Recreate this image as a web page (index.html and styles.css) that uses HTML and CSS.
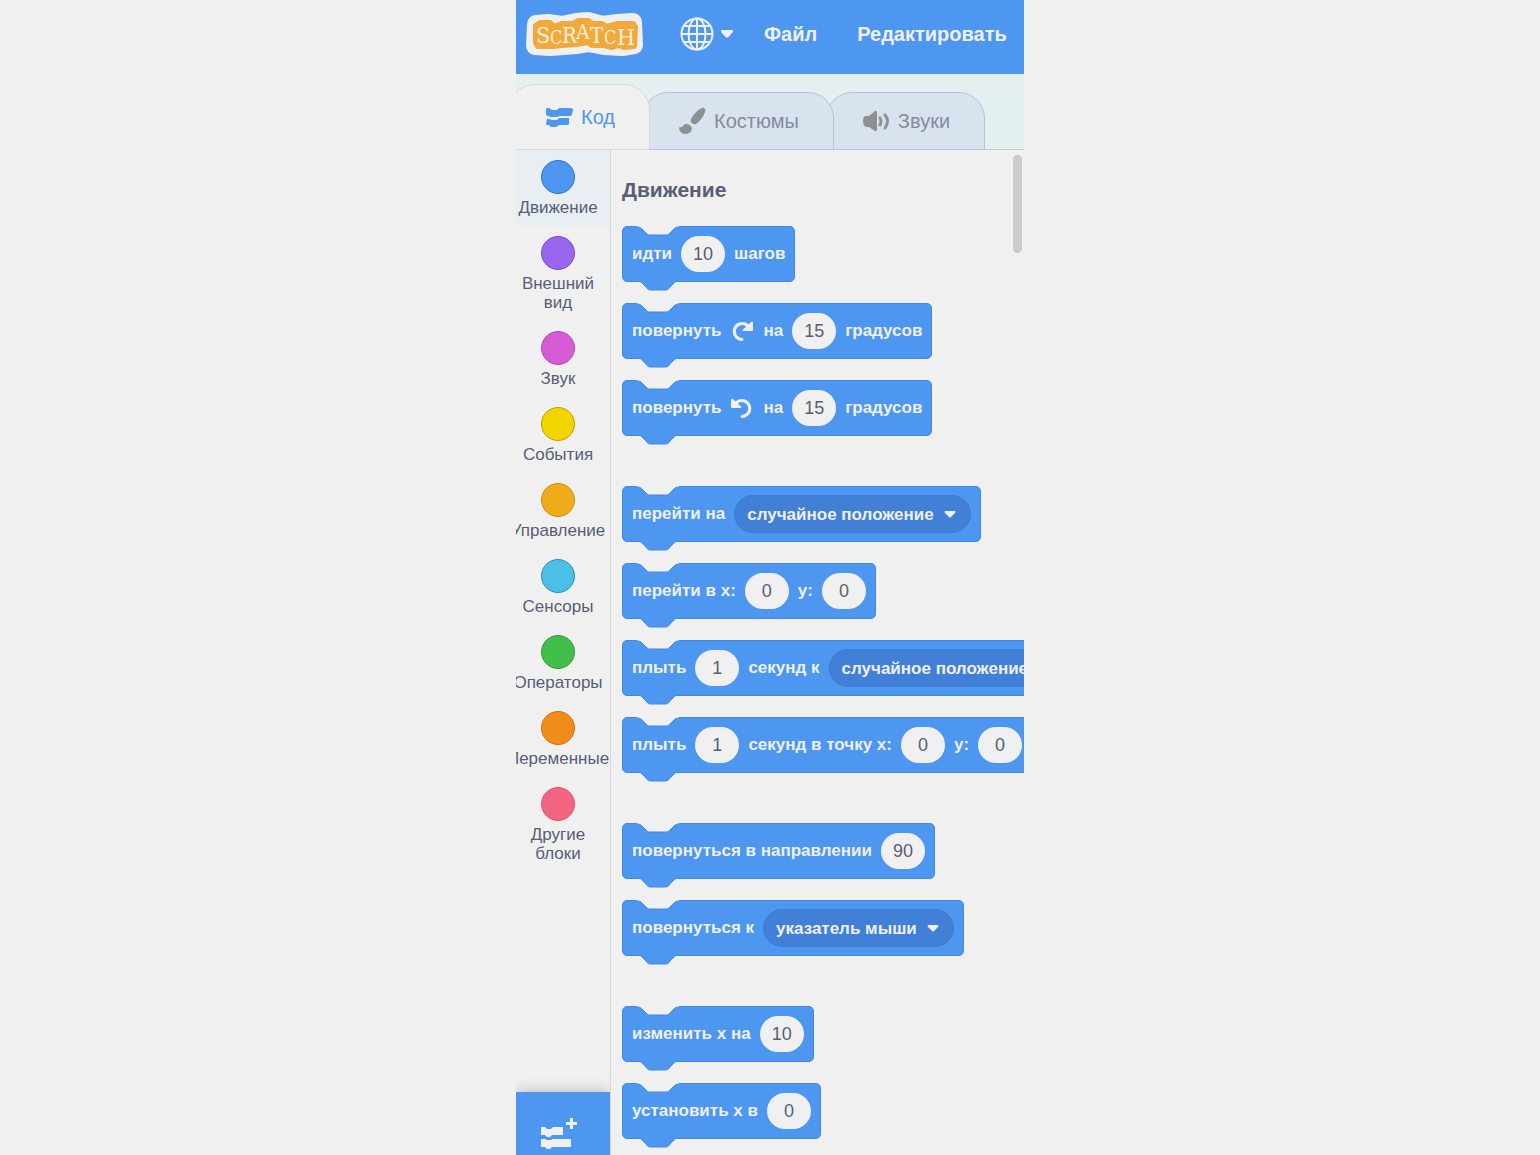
FILE: index.html
```
<!DOCTYPE html>
<html lang="ru">
<head>
	<meta charset="UTF-8">
	<meta name="viewport" content="width=device-width, initial-scale=1.0">
	<title>Scratch</title>
	<link rel="stylesheet" href="styles.css">
</head>
<body>
	<svg class="sprite" aria-hidden="true">
		<symbol id="notch" viewBox="0 0 42 10">
			<path class="notch-fill" d="M0 0V1C3 1 4 2 5 3L9 7C11 9 12 9 14 9H28C30 9 31 9 33 7L37 3C38 2 39 1 42 1V0Z"/>
			<path class="edge" d="M0 1C3 1 4 2 5 3L9 7C11 9 12 9 14 9H28C30 9 31 9 33 7L37 3C38 2 39 1 42 1"/>
		</symbol>
		<symbol id="bump" viewBox="0 0 42 10">
			<path class="bump-fill" d="M0 0C3 0 4 1 5 2L9 6C11 9 12 9 14 9H28C30 9 31 9 33 6L37 2C38 1 39 0 42 0Z"/>
			<path class="edge" d="M0 0C3 0 4 1 5 2L9 6C11 9 12 9 14 9H28C30 9 31 9 33 6L37 2C38 1 39 0 42 0"/>
		</symbol>
		<symbol id="turn" viewBox="0 0 24 24">
			<path d="M12 20.500A8 8 0 1 1 17.500 6.500" fill="none" stroke="#f0f0f0" stroke-width="3" stroke-linecap="round"/>
			<path d="M21 3Q23 2 23 4V11Q23 12 22 12H14Q12 12 13 10.500Z" fill="#f0f0f0"/>
		</symbol>
	</svg>

	<div class="app">
		<header class="menu-bar">
			<a class="logo" href="#" aria-label="Scratch">
				<svg width="118" height="46" viewBox="0 0 118 46">
					<path class="logo-outline" d="M10 13L22 12L36 14L50 11L62 10L76 14L92 12L107 11L108 34L96 36L78 35L62 32L50 34L24 36L9 35Z"/>
					<path class="logo-plate" d="M10 15L14 12H24L28 16L36 13H47L52 10H62L66 13H76L80 16L92 13H107L109 16L108 35L98 36L92 34L86 36L78 34H66L62 31L50 33L36 34L28 35L12 35L10 32Z"/>
					<text class="logo-text"><tspan x="10" y="32" font-size="23">S</tspan><tspan x="24" y="33" font-size="18">C</tspan><tspan x="36" y="32" font-size="22">R</tspan><tspan x="50" y="28" font-size="21">A</tspan><tspan x="64" y="32" font-size="22">T</tspan><tspan x="78" y="33" font-size="18">C</tspan><tspan x="91" y="34" font-size="23">H</tspan></text>
				</svg>
			</a>
			<button class="language" aria-label="Язык">
				<svg width="34" height="34" viewBox="0 0 34 34" fill="none" stroke="#f0f0f0" stroke-width="2">
					<circle cx="17" cy="17" r="15.500"/>
					<ellipse cx="17" cy="17" rx="8.500" ry="15.500"/>
					<path d="M17 1V33M1 17H33M4 9H30M4 25H30"/>
				</svg>
				<svg width="14" height="10" viewBox="0 0 14 10">
					<path d="M2 1H12Q14 1.500 12.500 3.500L8.500 8Q7 9.500 5.500 8L1.500 3.500Q0 1.500 2 1Z" fill="#f0f0f0"/>
				</svg>
			</button>
			<button class="menu-item">Файл</button>
			<button class="menu-item">Редактировать</button>
		</header>

		<div class="tabs">
			<button class="tab tab-active">
				<svg width="28" height="22" viewBox="0 0 28 22" fill="#4d97f0">
					<path d="M2 2H4Q6 4 8 4H11Q13 4 14 2H26Q28 2 28 4L27 8Q27 10 25 10H15Q13 11 11 11H6Q5 11 3 10Q1 10 1 8V3Z"/>
					<path d="M2 13H4Q6 14 7 14H11Q13 14 14 12H23Q25 12 24 14V18Q24 19 22 19H14Q12 21 10 21H7Q5 21 4 19H2Q1 19 1 18Z"/>
				</svg>
				Код
			</button>
			<button class="tab">
				<svg width="28" height="28" viewBox="0 0 28 28" fill="#8f9092">
					<path d="M26 1Q28 2 27 5Q24 13 18 17Q16 18 14 16Q12 15 13 12Q17 4 24 1Q25 0 26 1Z"/>
					<path d="M8 17Q12 17 14 21Q14 26 8 27Q2 27 1 21Q1 20 3 20Q5 20 5 19Q6 17 8 17Z"/>
				</svg>
				Костюмы
			</button>
			<button class="tab">
				<svg width="28" height="22" viewBox="0 0 28 22" fill="#8f9092">
					<path d="M13 1Q15 0 15 3V19Q15 22 13 21L7 17H4Q1 16 1 11Q1 6 4 6H7Z"/>
					<path d="M18 8Q20 11 18 15M23 5Q28 11 23 18" fill="none" stroke="#8f9092" stroke-width="3" stroke-linecap="round"/>
				</svg>
				Звуки
			</button>
		</div>

		<main class="editor">
			<div class="sidebar">
				<nav class="categories">
					<a class="category selected" href="#"><span class="bubble motion"></span>Движение</a>
					<a class="category" href="#"><span class="bubble looks"></span>Внешний<br>вид</a>
					<a class="category" href="#"><span class="bubble sound"></span>Звук</a>
					<a class="category" href="#"><span class="bubble events"></span>События</a>
					<a class="category" href="#"><span class="bubble control"></span>Управление</a>
					<a class="category" href="#"><span class="bubble sensing"></span>Сенсоры</a>
					<a class="category" href="#"><span class="bubble operators"></span>Операторы</a>
					<a class="category" href="#"><span class="bubble variables"></span>Переменные</a>
					<a class="category" href="#"><span class="bubble more"></span>Другие<br>блоки</a>
				</nav>
				<button class="add-extension" aria-label="Добавить расширение">
					<svg width="38" height="32" viewBox="0 0 38 32" fill="#f0f0f0">
						<path d="M1 9H5L7 11H11L13 9H23V17H12L10 19H7L5 17H1Z"/>
						<path d="M1 21H5L7 22H11L13 21H31V29H12L10 31H7L5 29H1Z"/>
						<path d="M30 0H33V4H37V7H33V11H30V7H26V4H30Z"/>
					</svg>
				</button>
			</div>

			<section class="palette">
				<h2>Движение</h2>
				<div class="group">
					<div class="block">
						<svg class="notch"><use href="#notch"/></svg>
						<span>идти</span><input class="number" value="10" aria-label="шагов"><span>шагов</span>
						<svg class="bump"><use href="#bump"/></svg>
					</div>
					<div class="block">
						<svg class="notch"><use href="#notch"/></svg>
						<span>повернуть</span><svg class="turn"><use href="#turn"/></svg><span>на</span><input class="number" value="15" aria-label="градусов по часовой стрелке"><span>градусов</span>
						<svg class="bump"><use href="#bump"/></svg>
					</div>
					<div class="block">
						<svg class="notch"><use href="#notch"/></svg>
						<span>повернуть</span><svg class="turn turn-left"><use href="#turn"/></svg><span>на</span><input class="number" value="15" aria-label="градусов против часовой стрелки"><span>градусов</span>
						<svg class="bump"><use href="#bump"/></svg>
					</div>
				</div>

				<div class="group">
					<div class="block">
						<svg class="notch"><use href="#notch"/></svg>
						<span>перейти на</span>
						<span class="dropdown">
							<select aria-label="перейти на"><option>случайное положение</option></select>
							<svg class="arrow" viewBox="0 0 12 8"><path d="M1 1H11Q12 2 11 3L7 7Q6 8 5 7L1 3Q0 2 1 1Z"/></svg>
						</span>
						<svg class="bump"><use href="#bump"/></svg>
					</div>
					<div class="block">
						<svg class="notch"><use href="#notch"/></svg>
						<span>перейти в x:</span><input class="number" value="0" aria-label="перейти в x"><span>y:</span><input class="number" value="0" aria-label="перейти в y">
						<svg class="bump"><use href="#bump"/></svg>
					</div>
					<div class="block">
						<svg class="notch"><use href="#notch"/></svg>
						<span>плыть</span><input class="number" value="1" aria-label="секунд"><span>секунд к</span>
						<span class="dropdown">
							<select aria-label="плыть к"><option>случайное положение</option></select>
							<svg class="arrow" viewBox="0 0 12 8"><path d="M1 1H11Q12 2 11 3L7 7Q6 8 5 7L1 3Q0 2 1 1Z"/></svg>
						</span>
						<svg class="bump"><use href="#bump"/></svg>
					</div>
					<div class="block">
						<svg class="notch"><use href="#notch"/></svg>
						<span>плыть</span><input class="number" value="1" aria-label="секунд"><span>секунд в точку x:</span><input class="number" value="0" aria-label="плыть в x"><span>y:</span><input class="number" value="0" aria-label="плыть в y">
						<svg class="bump"><use href="#bump"/></svg>
					</div>
				</div>

				<div class="group">
					<div class="block">
						<svg class="notch"><use href="#notch"/></svg>
						<span>повернуться в направлении</span><input class="number" value="90" aria-label="направление">
						<svg class="bump"><use href="#bump"/></svg>
					</div>
					<div class="block">
						<svg class="notch"><use href="#notch"/></svg>
						<span>повернуться к</span>
						<span class="dropdown">
							<select aria-label="повернуться к"><option>указатель мыши</option></select>
							<svg class="arrow" viewBox="0 0 12 8"><path d="M1 1H11Q12 2 11 3L7 7Q6 8 5 7L1 3Q0 2 1 1Z"/></svg>
						</span>
						<svg class="bump"><use href="#bump"/></svg>
					</div>
				</div>

				<div class="group">
					<div class="block">
						<svg class="notch"><use href="#notch"/></svg>
						<span>изменить x на</span><input class="number" value="10" aria-label="изменить x на">
						<svg class="bump"><use href="#bump"/></svg>
					</div>
					<div class="block">
						<svg class="notch"><use href="#notch"/></svg>
						<span>установить x в</span><input class="number" value="0" aria-label="установить x в">
						<svg class="bump"><use href="#bump"/></svg>
					</div>
				</div>
				<div class="scroll-thumb"></div>
			</section>
		</main>
	</div>
</body>
</html>
```
FILE: styles.css
```
* {
	box-sizing: border-box;
}

body {
	margin: 0;
	background-color: #f0f0f0;
	color: #575e75;
	font-family: "Liberation Sans", Arial, sans-serif;
}

button,
input,
select {
	font-family: inherit;
	border: none;
	margin: 0;
	padding: 0;
	background: none;
}

button {
	cursor: pointer;
}

svg {
	flex: none;
}

.sprite {
	position: absolute;
	width: 0;
	height: 0;
}

.app {
	display: flex;
	flex-direction: column;
	max-width: 508px;
	height: 100vh;
	margin: 0 auto;
	overflow: hidden;
}

/* top menu */
.menu-bar {
	display: flex;
	align-items: center;
	flex: none;
	height: 74px;
	padding: 0 0 6px 10px;
	background-color: #4d97f0;
}

.logo {
	display: flex;
}

.logo-outline {
	fill: #f0f0f0;
	stroke: #f0f0f0;
	stroke-width: 18;
	stroke-linejoin: round;
}

.logo-plate {
	fill: #f2a93b;
	stroke: #f2a93b;
	stroke-width: 6;
	stroke-linejoin: round;
}

.logo-text {
	font-family: "DejaVu Serif Condensed", "Liberation Serif", serif;
	fill: #fbf0dc;
}

.language {
	display: flex;
	align-items: center;
	gap: 6px;
	margin-left: 36px;
}

.menu-item {
	margin-left: 30px;
	color: #f0f0f0;
	font-size: 20px;
	font-weight: bold;
}

.menu-item + .menu-item {
	margin-left: 40px;
}

/* tabs */
.tabs {
	display: flex;
	align-items: flex-end;
	flex: none;
	height: 76px;
	padding-left: 1px;
	background-color: #e4f0f0;
	border-bottom: 1px solid #c5ccd8;
}

.tab {
	position: relative;
	display: flex;
	align-items: center;
	gap: 8px;
	height: 58px;
	margin: 0 0 -1px -8px;
	padding: 0 34px 0 35px;
	background-color: #d9e3ef;
	border: 1px solid #b8c3d6;
	border-radius: 26px 26px 0 0;
	color: #858b9b;
	font-size: 20px;
	z-index: 1;
}

.tab:nth-child(2) {
	z-index: 2;
}

.tab-active {
	height: 66px;
	background-color: #f0f0f0;
	border-color: #d9d9d9;
	color: #4d97f0;
	z-index: 3;
}

/* categories */
.editor {
	display: flex;
	flex: 1;
	min-height: 0;
}

.sidebar {
	display: flex;
	flex-direction: column;
	flex: none;
	width: 95px;
	overflow: hidden;
	border-right: 1px solid #d9d9d9;
}

.categories {
	flex: 1;
	margin-left: -10px;
}

.category {
	display: block;
	padding: 10px 0 9px;
	color: #575e75;
	font-size: 17px;
	line-height: 19px;
	text-align: center;
	text-decoration: none;
}

.selected {
	background-color: #e9eef2;
}

.bubble {
	display: block;
	width: 34px;
	height: 34px;
	margin: 0 auto 4px;
	border: 1px solid;
	border-radius: 50%;
}

.motion {
	background-color: #4d97f0;
	border-color: #3373cc;
}

.looks {
	background-color: #9966f0;
	border-color: #774dcb;
}

.sound {
	background-color: #d65cd6;
	border-color: #bd42bd;
}

.events {
	background-color: #f0d500;
	border-color: #cc9900;
}

.control {
	background-color: #f0ab19;
	border-color: #cf8b17;
}

.sensing {
	background-color: #4cbfe6;
	border-color: #2e8eb8;
}

.operators {
	background-color: #40bf4a;
	border-color: #389438;
}

.variables {
	background-color: #f08c1a;
	border-color: #db6e00;
}

.more {
	background-color: #f06680;
	border-color: #f04d6a;
}

.add-extension {
	flex: none;
	height: 63px;
	padding: 24px 0 0 24px;
	background-color: #4d97f0;
	box-shadow: 0 0 14px rgba(0, 0, 0, 0.25);
	text-align: left;
}

/* blocks */
.palette {
	position: relative;
	flex: 1;
	min-width: 0;
	padding: 28px 0 0 11px;
	overflow: hidden;
}

.palette h2 {
	margin: 0 0 24px;
	font-size: 21px;
	line-height: 24px;
}

.group {
	display: flex;
	flex-direction: column;
	align-items: flex-start;
	gap: 21px;
	margin-bottom: 50px;
}

.block {
	position: relative;
	display: flex;
	align-items: center;
	gap: 9px;
	height: 56px;
	padding: 0 9px;
	background-color: #4d97f0;
	border: 1px solid #4388e6;
	border-radius: 5px;
	color: #f0f0f0;
	font-size: 17px;
	font-weight: bold;
	white-space: nowrap;
}

.notch,
.bump {
	position: absolute;
	left: 14px;
	width: 42px;
	height: 10px;
}

.notch {
	top: -1px;
}

.bump {
	top: 54px;
}

.notch-fill {
	fill: #f0f0f0;
}

.bump-fill {
	fill: #4d97f0;
}

.edge {
	fill: none;
	stroke: #4388e6;
}

.turn {
	width: 24px;
	height: 24px;
}

.turn-left {
	transform: scaleX(-1);
}

.number {
	width: 44px;
	height: 36px;
	border-radius: 18px;
	background-color: #f0f0f0;
	color: #575e75;
	font-size: 18px;
	text-align: center;
}

.dropdown {
	position: relative;
	display: flex;
	align-items: center;
}

.dropdown select {
	appearance: none;
	height: 38px;
	padding: 0 36px 0 12px;
	background-color: #4280d7;
	border: 1px solid #3d7bd4;
	border-radius: 19px;
	color: #f0f0f0;
	font-size: 17px;
	font-weight: bold;
}

.arrow {
	position: absolute;
	right: 15px;
	width: 12px;
	height: 8px;
	fill: #f0f0f0;
	pointer-events: none;
}

.scroll-thumb {
	position: absolute;
	top: 5px;
	right: 2px;
	width: 9px;
	height: 98px;
	border-radius: 5px;
	background-color: #cbcbcb;
}
```
